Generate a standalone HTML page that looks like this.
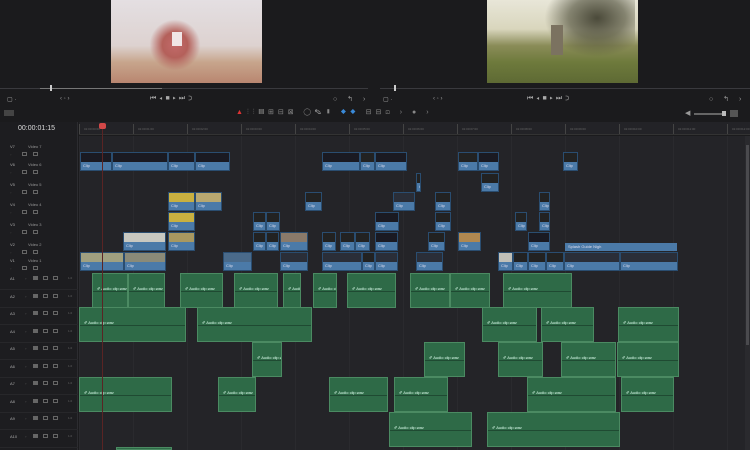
<!DOCTYPE html>
<html style="width:750px;height:450px;overflow:hidden"><head><meta charset="utf-8">
<style>
*{margin:0;padding:0;box-sizing:border-box}
body{width:750px;height:450px;overflow:hidden;background:#1b1b1d;font-family:"Liberation Sans",sans-serif;position:relative;color:#aaa}
.a{position:absolute}
.vc{position:absolute;border:1px solid #2a4d70;background:#101016}
.vc .lb{position:absolute;left:0;right:0;bottom:0;height:8px;background:#4b7aa8;font-size:4px;color:#dde;padding-left:2px;line-height:8px;overflow:hidden;white-space:nowrap}
.gc{position:absolute;background:#2e6a47;border:1px solid #4b8a62;font-size:4px;color:#dfe;line-height:30px;padding-left:4px;overflow:hidden;white-space:nowrap}
.gc:after{content:"";position:absolute;left:0;right:0;top:50%;height:1px;background:#1f4a32}
.ic{position:absolute;width:5px;height:4px;border:1px solid #666;}
</style></head><body>
<div class="a" style="left:111px;top:0;width:151px;height:83px;background:linear-gradient(180deg,#e4dfe2 0%,#ddd2d0 55%,#c7a58c 75%,#b98670 100%)"></div>
<div class="a" style="left:145px;top:15px;width:60px;height:60px;background:radial-gradient(ellipse at 50% 50%,#c26a6a 0%,#b4605a 30%,transparent 60%)"></div>
<div class="a" style="left:172px;top:32px;width:10px;height:14px;background:#f0e6e6"></div>
<div class="a" style="left:487px;top:0;width:151px;height:83px;background:linear-gradient(180deg,#e8e6d8 0%,#d9d6bd 35%,#8a8c58 55%,#6e7a3c 75%,#5e6a34 100%)"></div>
<div class="a" style="left:540px;top:0;width:95px;height:60px;background:radial-gradient(ellipse at 60% 30%,#4b4a3a 0%,rgba(70,70,50,.6) 35%,transparent 65%)"></div>
<div class="a" style="left:551px;top:25px;width:12px;height:30px;background:#7b7260"></div>
<div class="a" style="left:0;top:88px;width:368px;height:1px;background:#3a3a3e"></div>
<div class="a" style="left:40px;top:88px;width:122px;height:1px;background:#777"></div>
<div class="a" style="left:380px;top:88px;width:370px;height:1px;background:#3a3a3e"></div>
<div class="a" style="left:50px;top:85px;width:2px;height:6px;background:#ccc"></div>
<div class="a" style="left:394px;top:85px;width:2px;height:6px;background:#ccc"></div>
<div class="a" style="left:7px;top:96px;font-size:6px;color:#aaa">▢ ·</div>
<div class="a" style="left:60px;top:96px;font-size:6px;color:#999">‹ ◦ ›</div>
<div class="a" style="left:150px;top:95px;font-size:7px;color:#aaa;letter-spacing:3px">⏮◂■▸⏭⊃</div>
<div class="a" style="left:333px;top:95px;font-size:7px;color:#999;letter-spacing:4px">○ ↰ ›</div>
<div class="a" style="left:383px;top:96px;font-size:6px;color:#aaa">▢ ·</div>
<div class="a" style="left:433px;top:96px;font-size:6px;color:#999">‹ ◦ ›</div>
<div class="a" style="left:527px;top:95px;font-size:7px;color:#aaa;letter-spacing:3px">⏮◂■▸⏭⊃</div>
<div class="a" style="left:709px;top:95px;font-size:7px;color:#999;letter-spacing:4px">○ ↰ ›</div>
<div class="a" style="left:4px;top:110px;width:10px;height:6px;background:#444"></div>
<div class="a" style="left:236px;top:108px;font-size:7px;color:#888;letter-spacing:4px"><span style="color:#d33">▲</span>⫶⫶▤⊞⊟⊠ ◯<span style="color:#ddd">✎</span>▮ <span style="color:#3a8ad8">◆◆</span> ⊟⊟⊡ › ● ›</div>
<div class="a" style="left:685px;top:109px;font-size:7px;color:#999">◀</div>
<div class="a" style="left:694px;top:113px;width:30px;height:2px;background:#666"></div>
<div class="a" style="left:722px;top:111px;width:4px;height:5px;background:#bbb"></div>
<div class="a" style="left:730px;top:110px;width:8px;height:7px;background:#555"></div>
<div class="a" style="left:0;top:122px;width:78px;height:328px;background:#1d1d20;border-right:1px solid #2c2c30"></div>
<div class="a" style="left:79px;top:122px;width:671px;height:13px;background:#232327;border-bottom:1px solid #333"></div>
<div class="a" style="left:79px;top:136px;width:666px;height:314px;background:#242428"></div>
<div class="a" style="left:745px;top:136px;width:5px;height:314px;background:#2a2a2e"></div>
<div class="a" style="left:746px;top:145px;width:3px;height:200px;background:#4a4a4e"></div>
<div class="a" style="left:18px;top:125px;font-size:7px;color:#ddd">00:00:01:15</div>
<div id="tl"></div>
<div class="a" style="left:102px;top:128px;width:1px;height:322px;background:#5a2424"></div>
<div class="a" style="left:99px;top:123px;width:7px;height:6px;background:#d24848;border-radius:2px"></div>
<script>
var H='';
for(var x=79;x<745;x+=54){H+='<div class="a" style="left:'+x+'px;top:124px;width:1px;height:10px;background:#444"></div><div class="a" style="left:'+(x+5)+'px;top:127px;font-size:3px;color:#666">01:00:0'+Math.floor((x-79)/54)+':00</div>';
H+='<div class="a" style="left:'+x+'px;top:136px;width:1px;height:314px;background:#2a2a2e"></div>';}
var vt=[[144,'Video 7'],[162,'Video 6'],[182,'Video 5'],[202,'Video 4'],[222,'Video 3'],[242,'Video 2'],[258,'Video 1']];
vt.forEach(function(t,i){var y=t[0];H+='<div class="a" style="left:10px;top:'+y+'px;font-size:4px;color:#aaa">V'+(7-i)+'</div><div class="a" style="left:28px;top:'+y+'px;font-size:4px;color:#999">'+t[1]+'</div><div class="ic" style="left:22px;top:'+(y+8)+'px"></div><div class="ic" style="left:33px;top:'+(y+8)+'px"></div><div class="a" style="left:10px;top:'+(y+8)+'px;font-size:4px;color:#555">◦</div>';});
for(var i=0;i<10;i++){var y=276+i*17.5;H+='<div class="a" style="left:10px;top:'+y+'px;font-size:4px;color:#aaa">A'+(i+1)+'</div><div class="a" style="left:25px;top:'+y+'px;font-size:4px;color:#777">◦</div><div class="ic" style="left:33px;top:'+y+'px;background:#666"></div><div class="ic" style="left:43px;top:'+y+'px"></div><div class="ic" style="left:53px;top:'+y+'px"></div><div class="a" style="left:68px;top:'+y+'px;font-size:3px;color:#666">1.0</div>';H+='<div class="a" style="left:0;top:'+(y+13)+'px;width:78px;height:1px;background:#27272a"></div>';}
var v=[[80,112,152],[112,168,152],[168,195,152],[195,230,152],[322,360,152],[360,375,152],[375,407,152],[458,478,152],[478,499,152],[563,578,152],
[416,421,173],[481,499,173],
[168,195,192],[195,222,192],[305,322,192],[393,415,192],[435,451,192],[539,550,192],
[168,195,212],[253,266,212],[266,280,212],[375,399,212],[435,451,212],[515,527,212],[539,550,212],
[123,166,232],[168,195,232],[253,266,232],[266,279,232],[280,308,232],[322,336,232],[340,355,232],[355,370,232],[375,398,232],[428,445,232],[458,481,232],[528,550,232],
[80,124,252],[124,166,252],[223,252,252],[280,308,252],[322,362,252],[362,375,252],[375,398,252],[416,443,252],[498,513,252],[513,528,252],[528,546,252],[546,564,252],[564,620,252],[620,678,252]];
v.forEach(function(c){var top=c[1]-c[0]>20?(c[2]%3?'#1a1a22':'#2a2e38'):'#222';H+='<div class="vc" style="left:'+c[0]+'px;top:'+c[2]+'px;width:'+(c[1]-c[0])+'px;height:19px;background:'+top+'"><div class="lb">Clip</div></div>';});
[[168,195,192,'#c8b040'],[195,222,192,'#b8a870'],[168,195,212,'#c8b040'],[123,166,232,'#c8c8c0'],[168,195,232,'#a89860'],[80,124,252,'#a0a080'],[124,166,252,'#8a8a78'],[280,308,232,'#8a7a6a'],[458,481,232,'#b08850'],[498,513,252,'#c0c0b8'],[223,252,252,'#4a6a8a']].forEach(function(c){H+='<div class="a" style="left:'+(c[0]+1)+'px;top:'+(c[2]+1)+'px;width:'+(c[1]-c[0]-2)+'px;height:9px;background:'+c[3]+'"></div>';});
H+='<div class="a" style="left:565px;top:243px;width:112px;height:8px;background:#4b7aa8;font-size:4px;color:#dde;line-height:8px;padding-left:3px">Splash Guide Nigh</div>';
var g=[[92,128,0],[128,165,0],[180,223,0],[234,278,0],[283,301,0],[313,337,0],[347,396,0],[410,450,0],[450,490,0],[503,572,0],
[79,186,1],[197,312,1],[482,537,1],[541,594,1],[618,679,1],
[252,282,2],[424,465,2],[498,543,2],[561,616,2],[617,679,2],
[79,172,3],[218,256,3],[329,388,3],[394,448,3],[527,616,3],[621,674,3],
[389,472,4],[487,620,4],[116,172,5]];
var py=[273,307,342,377,412,447];
g.forEach(function(c){H+='<div class="gc" style="left:'+c[0]+'px;top:'+py[c[2]]+'px;width:'+(c[1]-c[0])+'px;height:'+(c[2]==5?3:35)+'px">&#x2710; Audio clip.wav</div>';});
document.getElementById('tl').innerHTML=H;
</script>
</body></html>
